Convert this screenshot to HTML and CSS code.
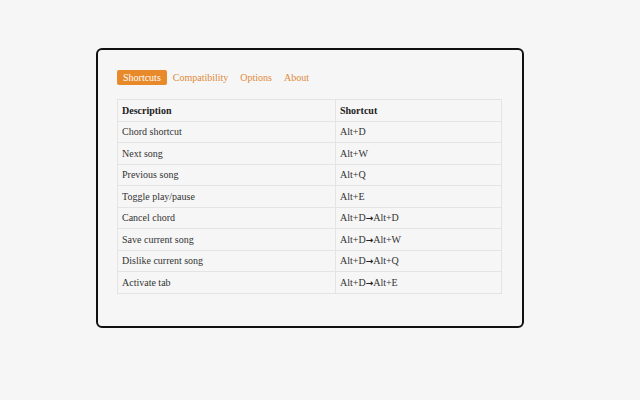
FILE: index.html
```html
<!DOCTYPE html>
<html>
<head>
<meta charset="utf-8">
<link rel="stylesheet" href="styles.css">
</head>
<body>
<div class="card">
  <nav class="tabs">
    <span class="tab active">Shortcuts</span>
    <span class="tab">Compatibility</span>
    <span class="tab">Options</span>
    <span class="tab">About</span>
  </nav>
  <table class="shortcuts">
    <thead>
      <tr><th class="c1">Description</th><th>Shortcut</th></tr>
    </thead>
    <tbody>
      <tr><td>Chord shortcut</td><td>Alt+D</td></tr>
      <tr><td>Next song</td><td>Alt+W</td></tr>
      <tr><td>Previous song</td><td>Alt+Q</td></tr>
      <tr><td>Toggle play/pause</td><td>Alt+E</td></tr>
      <tr><td>Cancel chord</td><td>Alt+D<span class="arr">→</span>Alt+D</td></tr>
      <tr><td>Save current song</td><td>Alt+D<span class="arr">→</span>Alt+W</td></tr>
      <tr><td>Dislike current song</td><td>Alt+D<span class="arr">→</span>Alt+Q</td></tr>
      <tr><td>Activate tab</td><td>Alt+D<span class="arr">→</span>Alt+E</td></tr>
    </tbody>
  </table>
</div>
</body>
</html>
```
FILE: styles.css
```css
html, body {
  margin: 0;
  padding: 0;
  background: #f6f6f6;
}
body {
  padding: 48px 0 0 96px;
  font-family: "Liberation Serif", "Times New Roman", serif;
  color: #333;
}
.card {
  width: 385px;
  height: 229px;
  border: 2px solid #111;
  border-radius: 6px;
  padding: 19px 20px 28px 19px;
  background: #f6f6f6;
}
.tabs {
  display: flex;
  align-items: center;
  height: 16px;
  margin-bottom: 14px;
}
.tab {
  font-size: 10px;
  color: #e08a3a;
  padding: 2px 6px;
  line-height: 11px;
  border-radius: 2px;
}
.tab.active {
  background: #e8892a;
  color: #fff;
}
.shortcuts {
  width: 385px;
  border-collapse: collapse;
  font-size: 10px;
}
.shortcuts th, .shortcuts td {
  border: 1px solid #e4e4e4;
  text-align: left;
  height: 20.5px;
  padding: 0 4px;
  color: #333;
}
.shortcuts th {
  font-weight: bold;
  color: #222;
}
.c1 { width: 209px; }
.arr {
  font-family: "DejaVu Sans", sans-serif;
  font-weight: bold;
  font-size: 9px;
  color: #222;
}
```
